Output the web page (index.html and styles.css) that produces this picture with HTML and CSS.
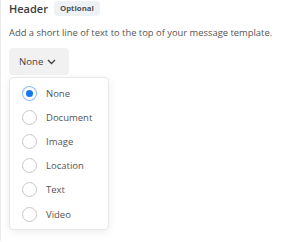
FILE: index.html
```html
<!DOCTYPE html>
<html lang="en">

<head>
    <meta charset="UTF-8">
    <meta name="viewport" content="width=device-width, initial-scale=1.0">
    <title>Header</title>
    <link rel="stylesheet" href="styles.css">
</head>

<body>

    <div class="section">
        <div class="title-row">
            <span class="title">Header</span>
            <span class="badge">Optional</span>
        </div>
        <p class="hint">Add a short line of text to the top of your message template.</p>

        <button class="select-btn" type="button">
            None
            <svg width="9" height="6" viewBox="0 0 9 6"><path d="M1 1l3.5 3.5L8 1" fill="none" stroke="#444" stroke-width="1.4"/></svg>
        </button>

        <ul class="menu">
            <li class="option selected"><span class="radio"></span>None</li>
            <li class="option"><span class="radio"></span>Document</li>
            <li class="option"><span class="radio"></span>Image</li>
            <li class="option"><span class="radio"></span>Location</li>
            <li class="option"><span class="radio"></span>Text</li>
            <li class="option"><span class="radio"></span>Video</li>
        </ul>
    </div>

</body>

</html>
```

FILE: styles.css
```css
body {
    margin: 0;
    font-family: "Open Sans", Arial, sans-serif;
    background: #fff;
}

.section {
    border-left: 1px solid #ebebeb;
    padding: 1px 0 0 8px;
    height: 241px;
    box-sizing: border-box;
}

.title-row {
    display: flex;
    align-items: center;
    gap: 6px;
    height: 15px;
}

.title {
    font-size: 11px;
    font-weight: 600;
    color: #3b3b3b;
}

.badge {
    font-size: 7.8px;
    font-weight: 700;
    color: #555;
    background: #eef2f5;
    border-radius: 4px;
    padding: 0 6px;
    line-height: 15px;
}

.hint {
    margin: 10px 0 0;
    font-size: 9.4px;
    line-height: 13px;
    color: #555;
}

.select-btn {
    display: flex;
    align-items: center;
    gap: 4px;
    height: 27px;
    margin-top: 9px;
    padding: 0 13px 0 10px;
    border: none;
    border-radius: 4px;
    background: #f1f1f1;
    font-family: inherit;
    font-size: 9.6px;
    color: #444;
}

.menu {
    list-style: none;
    margin: 2px 0 0;
    padding: 3px 0;
    width: 100px;
    box-sizing: border-box;
    border: 1px solid #e8e8e8;
    border-radius: 4px;
    box-shadow: 0 2px 8px rgba(0, 0, 0, 0.07);
}

.option {
    display: flex;
    align-items: center;
    gap: 9px;
    height: 24.2px;
    padding-left: 12px;
    font-size: 9.5px;
    color: #555;
}

.radio {
    width: 15px;
    height: 15px;
    border: 1px solid #c8c8c8;
    border-radius: 50%;
    box-sizing: border-box;
}

.selected .radio {
    border: 3px solid #fff;
    background: #1677f2;
    box-shadow: 0 0 0 1px #93bcf5;
    width: 13px;
    height: 13px;
    margin: 0 1px;
}
```
